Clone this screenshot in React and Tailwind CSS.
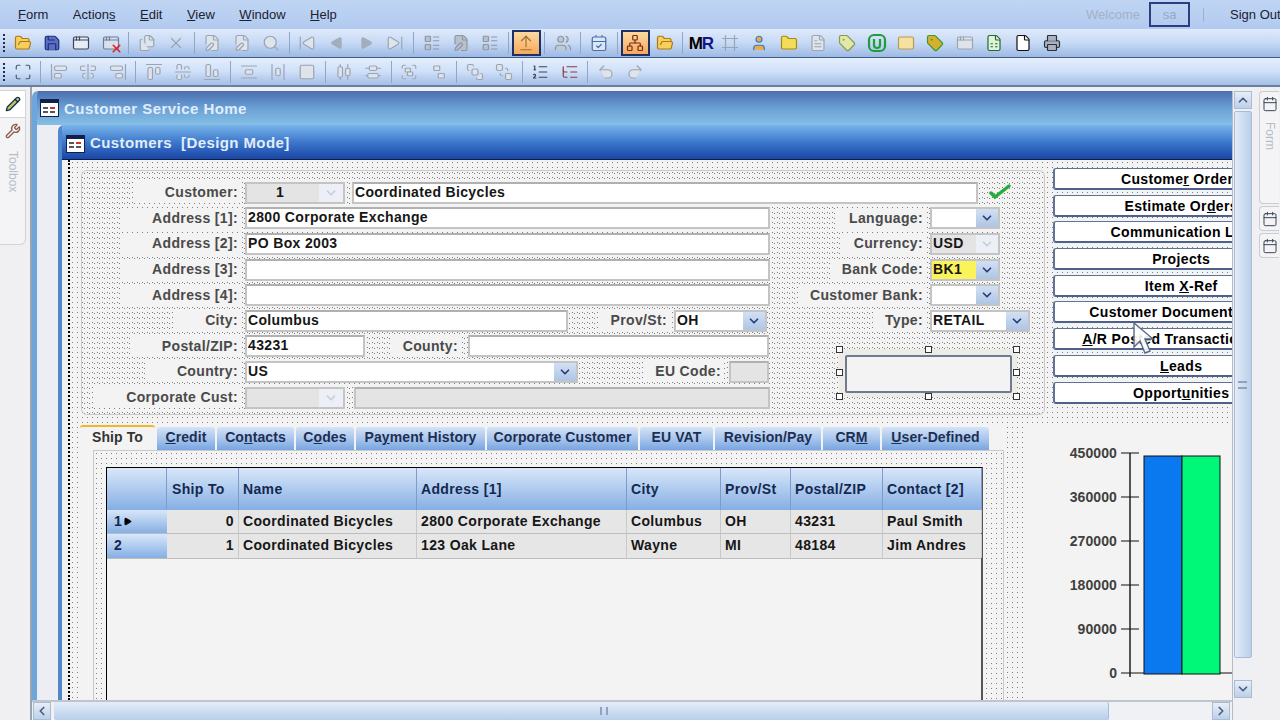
import {
  FolderOpen, Save, AppWindow, Files, X, FilePen, Search, SkipBack, SkipForward, Play, Users, CalendarCheck,
  Frame, User, Folder, FileText, Tag, Mail, FileSpreadsheet, File, Printer, Network, ArrowUpFromLine, LayoutList,
  Maximize, AlignStartVertical, AlignCenterVertical, AlignEndVertical, AlignStartHorizontal, AlignCenterHorizontal,
  AlignEndHorizontal, AlignVerticalSpaceAround, AlignHorizontalSpaceAround, Grid2x2, AlignHorizontalDistributeCenter,
  AlignVerticalDistributeCenter, Group, Ungroup, BringToFront, SendToBack, ListOrdered, ListTree, Undo2, Redo2,
  ChevronDown, ChevronUp, ChevronLeft, ChevronRight, Wrench, Pencil, Calendar,
} from "lucide-react"

const dots = "bg-[radial-gradient(circle,#808080_0.6px,transparent_0.75px)] bg-[length:5px_5px]"
const gray = "text-[#9aa5b4] fill-[#dfe3ea]"

// underline one letter of a caption, like a windows accelerator key
function Acc({ text, at }) {
  if (at === undefined) return text
  return (
    <>
      {text.slice(0, at)}
      <span className="underline">{text[at]}</span>
      {text.slice(at + 1)}
    </>
  )
}

function Sep() {
  return <div className="w-[7px] h-[22px] flex justify-center"><div className="w-px h-full bg-[#8fa6c6]" /></div>
}

function Btn({ icon: Icon, cls = gray, active, children }) {
  return (
    <div className={`w-[29.3px] h-[26px] flex items-center justify-center ${active ? "border-2 border-[#1c2f66] bg-gradient-to-b from-[#fbd9a0] to-[#f5a95a]" : ""}`}>
      {Icon ? <Icon size={18} strokeWidth={1.6} className={cls} /> : children}
    </div>
  )
}

function Grip() {
  return <div className="w-[2px] h-[18px] mr-[3px] ml-[3px] border-l-2 border-dotted border-[#1e2e50]" />
}

function GreenU() {
  return (
    <svg width="20" height="20" viewBox="0 0 20 20" fill="none" stroke="#1f9d3a" strokeWidth="2.2">
      <rect x="2" y="2" width="16" height="16" rx="5" />
      <path d="M7 6v6a3 3 0 0 0 6 0V6" />
    </svg>
  )
}

function Toolbar1() {
  return (
    <div className="h-[29px] flex items-center bg-gradient-to-b from-[#dfeafb] via-[#c6d9f5] to-[#9db9e3] border-b border-[#3d5a8c]">
      <Grip />
      <Btn icon={FolderOpen} cls="text-[#b07a10] fill-[#f6cf5e]" />
      <Btn icon={Save} cls="text-[#1c2f80] fill-[#5a6fc0]" />
      <Btn icon={AppWindow} cls="text-[#3c4658] fill-[#e8edf5]" />
      <Btn>
        <div className="relative">
          <AppWindow size={18} strokeWidth={1.6} className="text-[#6d7d98] fill-[#d8e0ee]" />
          <X size={13} strokeWidth={3} className="absolute -right-[3px] -bottom-[3px] text-[#e02020]" />
        </div>
      </Btn>
      <Sep />
      <Btn icon={Files} />
      <Btn icon={X} />
      <Sep />
      <Btn icon={FilePen} />
      <Btn icon={FilePen} />
      <Btn icon={Search} />
      <Sep />
      <Btn icon={SkipBack} />
      <Btn><Play size={14} className="rotate-180 text-[#a3adbb] fill-[#a3adbb]" /></Btn>
      <Btn><Play size={14} className="text-[#a3adbb] fill-[#a3adbb]" /></Btn>
      <Btn icon={SkipForward} />
      <Sep />
      <Btn icon={LayoutList} cls="text-[#8d97a6] fill-[#b9c1cd]" />
      <Btn icon={FilePen} cls="text-[#8d97a6] fill-[#b9c1cd]" />
      <Btn icon={LayoutList} cls="text-[#8d97a6] fill-[#b9c1cd]" />
      <Sep />
      <Btn icon={ArrowUpFromLine} cls="text-[#a8702c]" active />
      <Sep />
      <Btn icon={Users} cls="text-[#8d97a6] fill-[#c2c8d2]" />
      <Sep />
      <Btn icon={CalendarCheck} cls="text-[#4a6ea8] fill-[#dbe6f5]" />
      <Sep />
      <Btn icon={Network} cls="text-[#7a2a18]" active />
      <Btn icon={FolderOpen} cls="text-[#b07a10] fill-[#f6cf5e]" />
      <Sep />
      <Btn>
        <span className="font-['Liberation_Sans',sans-serif] font-bold text-[17px] leading-none tracking-[-1px] text-[#14148c]"><span className="text-black">M</span>R</span>
      </Btn>
      <Btn icon={Frame} />
      <Btn icon={User} cls="text-[#2a7fd0] fill-[#f0a93a]" />
      <Btn icon={Folder} cls="text-[#a88a10] fill-[#f2dc5a]" />
      <Btn icon={FileText} />
      <Btn icon={Tag} cls="text-[#8a9a50] fill-[#e2e8a8]" />
      <Btn><GreenU /></Btn>
      <Btn icon={Mail} cls="text-[#b89a50] fill-[#f6e2a0]" />
      <Btn icon={Tag} cls="text-[#3d9a30] fill-[#d8b030]" />
      <Btn icon={AppWindow} />
      <Btn icon={FileSpreadsheet} cls="text-[#1e6a34] fill-[#e2f2d8]" />
      <Btn icon={File} cls="text-[#101010] fill-[#ffffff]" />
      <Btn icon={Printer} cls="text-[#2a2f38] fill-[#aab2bf]" />
    </div>
  )
}

function Toolbar2() {
  return (
    <div className="h-[29px] flex items-center bg-gradient-to-b from-[#e4eefc] via-[#cfe0f8] to-[#a4bfe6] border-b-2 border-[#6b7f9f]">
      <Grip />
      <Btn icon={Maximize} cls="text-[#4c5a70]" />
      <Sep />
      <Btn icon={AlignStartVertical} />
      <Btn icon={AlignCenterVertical} />
      <Btn icon={AlignEndVertical} />
      <Sep />
      <Btn icon={AlignStartHorizontal} />
      <Btn icon={AlignCenterHorizontal} />
      <Btn icon={AlignEndHorizontal} />
      <Sep />
      <Btn icon={AlignVerticalSpaceAround} />
      <Btn icon={AlignHorizontalSpaceAround} />
      <Btn icon={Grid2x2} />
      <Sep />
      <Btn icon={AlignHorizontalDistributeCenter} />
      <Btn icon={AlignVerticalDistributeCenter} />
      <Sep />
      <Btn icon={Group} />
      <Btn icon={Ungroup} />
      <Sep />
      <Btn icon={BringToFront} />
      <Btn icon={SendToBack} />
      <Sep />
      <Btn icon={ListOrdered} cls="text-[#39445a]" />
      <Btn icon={ListTree} cls="text-[#8a3a48]" />
      <Sep />
      <Btn icon={Undo2} />
      <Btn icon={Redo2} />
    </div>
  )
}

function MenuBar() {
  const items = [["Form", 0], ["Actions", 6], ["Edit", 0], ["View", 0], ["Window", 0], ["Help", 0]]
  return (
    <div className="h-[29px] flex items-center pl-[18px] bg-gradient-to-b from-[#c0d5f3] to-[#b1caef] text-[13px] text-[#1a2230]">
      <div className="flex gap-[24.5px] flex-1">
        {items.map(([t, a]) => <span key={t}><Acc text={t} at={a} /></span>)}
      </div>
      <span className="text-[#a3b0c6] mr-[9px]">Welcome</span>
      <div className="w-[41px] h-[25px] border-2 border-[#2b3f80] flex items-center justify-center text-[#9aa8be] mr-[13px]">sa</div>
      <div className="w-px h-[14px] bg-[#9fb0cc] mr-[26px]" />
      <span className="whitespace-nowrap w-[50px]">Sign Out</span>
    </div>
  )
}

function Label({ children, w }) {
  return (
    <div className="flex justify-end shrink-0" style={{ width: w }}>
      <span className="bg-[#f3f3f3] pl-[32px] pr-[3px] h-[21px] leading-[21px] text-[#4a4a4a] whitespace-nowrap">{children}</span>
    </div>
  )
}

function ShortLabel({ children, w }) {
  return (
    <div className="flex justify-end shrink-0" style={{ width: w }}>
      <span className="bg-[#f3f3f3] pl-[12px] pr-[3px] h-[21px] leading-[21px] text-[#4a4a4a] whitespace-nowrap">{children}</span>
    </div>
  )
}

function Field({ w, children, cls = "bg-white" }) {
  return (
    <div className={`h-[22px] ml-[4px] shrink-0 border-2 border-[#c4c4c4] border-t-[#b0b0b0] pl-[1px] leading-[17px] text-[#161616] overflow-hidden whitespace-nowrap ${cls}`} style={{ width: w }}>
      {children}
    </div>
  )
}

function Combo({ w, children, cls = "", off, arrowW = 22 }) {
  return (
    <div className={`h-[22px] ml-[4px] shrink-0 flex border-2 border-[#c4c4c4] leading-[17px] text-[#161616] ${off ? "bg-[#e4e4e4]" : "bg-white"}`} style={{ width: w }}>
      <div className={`flex-1 pl-[1px] overflow-hidden whitespace-nowrap ${cls}`}>{children}</div>
      <div className={`flex items-center justify-center ${off ? "bg-[#eceff5]" : "bg-gradient-to-b from-[#d3e0f3] to-[#aec5e4]"}`} style={{ width: arrowW }}>
        <ChevronDown size={14} strokeWidth={3} className={off ? "text-[#c8ced8]" : "text-[#23417a]"} />
      </div>
    </div>
  )
}

function Row({ children }) {
  return <div className="h-[25.6px] flex items-center">{children}</div>
}

function Handle() {
  return <div className="w-[7px] h-[7px] bg-white border border-[#333]" />
}

function SelectedBox() {
  return (
    <div className="relative w-[178px] h-[48px] ml-[64px] mt-[15px] bg-[#ecebe6]">
      <div className="absolute left-[6px] top-[6px] w-[167px] h-[38px] bg-[#f3f3f3] border-2 border-[#6f7b8c] rounded-[2px]" />
      <div className="absolute inset-0 flex flex-col justify-between -my-[3px] -mx-[3px]">
        <div className="flex justify-between"><Handle /><Handle /><Handle /></div>
        <div className="flex justify-between"><Handle /><Handle /></div>
        <div className="flex justify-between"><Handle /><Handle /><Handle /></div>
      </div>
    </div>
  )
}

function FormPanel() {
  return (
    <div className={`w-[965px] h-[245px] rounded-md border border-[#c9c9c9] pt-[9px] ${dots}`}>
      <Row>
        <Label w={159}>Customer:</Label>
        <Combo w={100} off arrowW={24}><div className="pl-[28px]">1</div></Combo>
        <div className="w-[3px]" />
        <Field w={626}>Coordinated Bicycles</Field>
        <svg className="ml-[10px] -mt-[3px]" width="24" height="16" viewBox="0 0 24 16" fill="none" stroke="#25ad3c" strokeWidth="3.4" strokeLinecap="round">
          <path d="M3 10l4 4L21 3" />
        </svg>
      </Row>
      <div className="flex">
        <div className="w-[693px] shrink-0">
          <Row><Label w={159}>Address [1]:</Label><Field w={525}>2800 Corporate Exchange</Field></Row>
          <Row><Label w={159}>Address [2]:</Label><Field w={525}>PO Box 2003</Field></Row>
          <Row><Label w={159}>Address [3]:</Label><Field w={525} /></Row>
          <Row><Label w={159}>Address [4]:</Label><Field w={525} /></Row>
          <Row>
            <Label w={159}>City:</Label><Field w={323}>Columbus</Field>
            <ShortLabel w={102}>Prov/St:</ShortLabel><Combo w={93}>OH</Combo>
          </Row>
          <Row>
            <Label w={159}>Postal/ZIP:</Label><Field w={120}>43231</Field>
            <ShortLabel w={96}>County:</ShortLabel><div className="w-[3px]" /><Field w={301} />
          </Row>
          <Row>
            <Label w={159}>Country:</Label><Combo w={333}>US</Combo>
            <ShortLabel w={146}>EU Code:</ShortLabel><div className="w-[1px]" /><Field w={40} cls="bg-[#e4e4e4]" />
          </Row>
          <Row>
            <Label w={159}>Corporate Cust:</Label><Combo w={100} off arrowW={24} />
            <div className="w-[5px]" />
            <Field w={416} cls="bg-[#e4e4e4]" />
          </Row>
        </div>
        <div className="flex-1">
          <Row><ShortLabel w={151}>Language:</ShortLabel><Combo w={70} /></Row>
          <Row><ShortLabel w={151}>Currency:</ShortLabel><Combo w={70} off>USD</Combo></Row>
          <Row>
            <ShortLabel w={151}>Bank Code:</ShortLabel>
            <Combo w={70} cls="bg-[#fbf35a]">BK1</Combo>
          </Row>
          <Row><ShortLabel w={151}>Customer Bank:</ShortLabel><Combo w={70} /></Row>
          <Row><ShortLabel w={151}>Type:</ShortLabel><Combo w={100}>RETAIL</Combo></Row>
          <SelectedBox />
        </div>
      </div>
    </div>
  )
}

function SideButtons() {
  const items = [
    ["Customer Orders", 7, ""],
    ["Estimate Orders", 11, ""],
    ["Communication Log", undefined, ""],
    ["Projects", undefined, ""],
    ["Item X-Ref", 5, ""],
    ["Customer Document", undefined, "pr-[40px]"],
    ["A/R Posted Transactions", 0, "pr-[25px]"],
    ["Leads", 0, ""],
    ["Opportunities", 6, ""],
  ]
  return (
    <div className="flex flex-col gap-[4.7px] w-[179px] -mt-[2px] overflow-hidden">
      {items.map(([t, a, extra]) => (
        <div key={t} className={`w-[254px] h-[22px] shrink-0 rounded-[3px] bg-white border-l-2 border-b-2 border-t border-[#5f7399] border-b-[#4d6288] leading-[21px] text-center text-black whitespace-nowrap ${extra}`}>
          <Acc text={t} at={a} />
        </div>
      ))}
    </div>
  )
}

function Tabs() {
  const tabs = [
    ["Credit", 0, 58], ["Contacts", 2, 77], ["Codes", 1, 58], ["Payment History", 2, 129],
    ["Corporate Customer", undefined, 151], ["EU VAT", undefined, 73], ["Revision/Pay", undefined, 106],
    ["CRM", 2, 57], ["User-Defined", 0, 107],
  ]
  return (
    <div className="flex h-[25px] items-end gap-[2px] tracking-[0.1px] -ml-[1px]">
      <div className="w-[75px] h-[25px] rounded-t-[3px] border-t-2 border-[#f3b531] bg-[#f3f3f3] text-center leading-[20px] text-[#333]">Ship To</div>
      {tabs.map(([t, a, w]) => (
        <div key={t} className="h-[23px] rounded-t-[3px] bg-gradient-to-b from-[#d5e3f6] via-[#a9c6ec] to-[#78a5e0] text-center leading-[21px] text-[#1d2f55] whitespace-nowrap" style={{ width: w }}>
          <Acc text={t} at={a} />
        </div>
      ))}
    </div>
  )
}

const cols = "grid grid-cols-[60px_72px_178px_210px_94px_70px_92px_99px]"

function Grid() {
  const heads = ["", "Ship To", "Name", "Address [1]", "City", "Prov/St", "Postal/ZIP", "Contact [2]"]
  const rows = [
    ["0", "Coordinated Bicycles", "2800 Corporate Exchange", "Columbus", "OH", "43231", "Paul Smith"],
    ["1", "Coordinated Bicycles", "123 Oak Lane", "Wayne", "MI", "48184", "Jim Andres"],
  ]
  return (
    <div className="w-[877px] h-[236px] bg-[#f3f3f3] border border-b-0 border-black border-r-2 border-r-[#555]">
      <div className={`${cols} h-[42px] bg-gradient-to-b from-[#d9e7f9] to-[#86afe4]`}>
        {heads.map((h, i) => (
          <div key={i} className={`border-r border-[#7f9cc8] flex items-center text-[#14294f] ${i === 1 ? "pl-[5px]" : "pl-[4px]"}`}>{h}</div>
        ))}
      </div>
      {rows.map((r, i) => (
        <div key={i} className={`${cols} h-[24.3px] border-b border-[#bdbdbd]`}>
          <div className="bg-gradient-to-b from-[#d9e7f9] to-[#86afe4] flex items-center pl-[7px] gap-[1px] text-[#14294f]">
            {i + 1}
            {i === 0 && <Play size={9} className="text-black fill-black" />}
          </div>
          {r.map((c, j) => (
            <div key={j} className={`bg-[#e6e6e6] border-r border-[#c9c9c9] flex items-center text-[#161616] whitespace-nowrap overflow-hidden ${j === 0 ? "justify-end pr-[4px]" : "pl-[4px]"}`}>{c}</div>
          ))}
        </div>
      ))}
    </div>
  )
}

function TabArea() {
  return (
    <div className="w-[925px] flex flex-col">
      <Tabs />
      <div className={`ml-[12px] w-[911px] flex-1 border border-b-0 border-[#c9c9c9] pl-[12px] pt-[16px] ${dots}`}>
        <Grid />
      </div>
    </div>
  )
}

function Chart() {
  const labels = ["450000", "360000", "270000", "180000", "90000", "0"]
  return (
    <div className="flex w-[172px] pt-[20px] self-stretch">
      <div className="w-[57px] h-[236px] flex flex-col justify-between items-end text-[#3f3f3f] tracking-[0.1px]">
        {labels.map(l => <span key={l} className="leading-[16px]">{l}</span>)}
      </div>
      <svg width="115" height="236" viewBox="0 0 115 236" className="shrink-0" fill="none" stroke="#111">
        <path d="M13 8V232" strokeWidth="1.4" />
        <path d="M4 8h18M4 52h18M4 96h18M4 140h18M4 184h18M4 228h111" strokeWidth="1.2" />
        <rect x="27" y="11" width="38" height="218" fill="#0a78ee" strokeWidth="1" />
        <rect x="65" y="11" width="38" height="218" fill="#00f878" strokeWidth="1" />
      </svg>
    </div>
  )
}

function DesignSurface() {
  return (
    <div className={`flex-1 min-h-0 overflow-hidden bg-[#f3f3f3] pl-[11px] pt-[10px] border-l-2 border-dotted border-black ${dots} flex flex-col gap-[10px] relative`}>
      <div className="flex gap-[8px]">
        <FormPanel />
        <SideButtons />
      </div>
      <div className="flex flex-1 min-h-0 bg-[#f3f3f3]">
        <TabArea />
        <div className={`w-[18px] ${dots}`} />
        <div className="w-[37px]" />
        <Chart />
      </div>
      {/* mouse pointer caught by the recording */}
      <svg className="absolute left-[1062px] top-[161px]" width="26" height="36" viewBox="0 0 26 36">
        <path d="M2 2v24l6-6 5 12 5-2-5-12h8z" fill="#fff" fillOpacity="0.9" stroke="#5a6a88" strokeWidth="1.4" />
      </svg>
    </div>
  )
}

function Mdi() {
  return (
    <div className="flex-1 min-h-0 flex flex-col rounded-tl-md overflow-hidden border-l-[5px] border-[#6ea6dc]">
      <div className="h-[34px] shrink-0 flex items-center pl-[3px] gap-[5px] bg-gradient-to-b from-[#4a6fb0] via-[#6a9fd4] to-[#86c0e6]">
        <WinIcon />
        <span className="pt-[2px] text-[#e1edfa] text-[15px] font-bold tracking-[0.45px]">Customer Service Home</span>
      </div>
      <div className="flex-1 min-h-0 flex bg-[#eceef3]">
        <div className="w-[21px] shrink-0" />
        <div className="flex-1 min-w-0 flex flex-col rounded-tl-md overflow-hidden border-l-[4px] border-[#4f86cc]">
          <div className="h-[35px] shrink-0 flex items-center pl-[4px] gap-[5px] pt-[3px] bg-gradient-to-b from-[#79b4ea] via-[#3d78cc] to-[#1b46a6] border-b border-[#0d1d4a]">
            <WinIcon />
            <span className="text-[#e1edfa] text-[15px] font-bold tracking-[0.4px]">Customers&nbsp; [Design Mode]</span>
          </div>
          <div className="flex-1 min-h-0 flex bg-[#f0f0f0]">
            <div className="w-[6px] shrink-0" />
            <DesignSurface />
          </div>
        </div>
      </div>
    </div>
  )
}

function WinIcon() {
  return (
    <div className="w-[19px] h-[18px] bg-white border border-[#10204a] border-t-[4px] flex flex-col justify-center gap-[2px] px-[2px]">
      <div className="h-[2px] flex gap-[2px]"><div className="w-[5px] bg-[#556]" /><div className="w-[5px] bg-[#c33]" /></div>
      <div className="h-[2px] flex gap-[2px]"><div className="w-[5px] bg-[#556]" /><div className="w-[5px] bg-[#556]" /></div>
    </div>
  )
}

function ArrowBtn({ icon: Icon, cls = "" }) {
  return (
    <div className={`w-[18px] h-[18px] shrink-0 flex items-center justify-center bg-gradient-to-b from-[#e8eef7] to-[#bcd0ea] border border-[#a9bcd6] ${cls}`}>
      <Icon size={14} strokeWidth={3} className="text-[#4b5f80]" />
    </div>
  )
}

function BottomScroll() {
  return (
    <div className="h-[20px] shrink-0 flex items-center bg-[#f0f1f4] border-t-2 border-[#c0c4cc] pl-[1px]">
      <ArrowBtn icon={ChevronLeft} />
      <div className="w-[1055px] h-[18px] ml-[3px] pl-[45px] rounded-[2px] bg-gradient-to-b from-[#e4edf9] to-[#b8cee9] border-r border-[#a9bcd6] flex items-center justify-center">
        <div className="w-[8px] h-[8px] border-x-2 border-[#8da3c2]" />
      </div>
      <div className="flex-1" />
      <ArrowBtn icon={ChevronRight} cls="mr-[2px]" />
    </div>
  )
}

function RightScroll() {
  return (
    <div className="w-[20px] shrink-0 mt-[4px] flex flex-col items-center bg-[#eef0f4] border-l border-[#b4bccb]">
      <ArrowBtn icon={ChevronUp} />
      <div className="w-[18px] h-[547px] mt-[2px] rounded-[2px] bg-gradient-to-r from-[#e3ecf8] to-[#b9cfe9] border border-[#a9bcd6] flex items-center justify-center">
        <div className="w-[9px] h-[8px] border-y-2 border-[#8da3c2]" />
      </div>
      <div className="flex-1" />
      <ArrowBtn icon={ChevronDown} cls="mb-[22px]" />
    </div>
  )
}

function DockTab({ icon: Icon, children, h }) {
  return (
    <div className="w-[20px] ml-[7px] rounded-l-[4px] border border-r-0 border-[#c8ccd4] bg-[#f4f4f6] flex flex-col items-center pt-[4px]" style={{ height: h }}>
      <Icon size={16} strokeWidth={1.5} className="text-[#3a4558] shrink-0" />
      {children && <span className="mt-[10px] [writing-mode:vertical-rl] text-[12px] text-[#b6bcc6]">{children}</span>}
    </div>
  )
}

export default function App() {
  return (
    <div className="w-[1280px] h-[720px] overflow-hidden flex flex-col bg-[#f0f0f2] font-['Liberation_Sans',sans-serif] text-[14px] font-bold tracking-[0.35px]">
      <div className="font-normal tracking-normal">
        <MenuBar />
        <Toolbar1 />
        <Toolbar2 />
      </div>
      <div className="flex-1 min-h-0 flex">
        <div className="w-[32px] shrink-0 border-r-[2px] border-[#9aa3b0] pt-[3px]">
          <div className="w-[26px] h-[155px] rounded-br-md border border-l-0 border-[#d0d3da] bg-[#f4f4f6] flex flex-col items-center font-normal tracking-normal">
            <div className="w-full h-[27px] bg-white border-b border-[#d0d3da] flex items-center justify-center">
              <Pencil size={16} className="text-[#1c2c50] fill-[#b7c95a]" />
            </div>
            <Wrench size={16} className="mt-[5px] text-[#8a5a4a]" />
            <span className="mt-[12px] [writing-mode:vertical-rl] text-[12px] text-[#b6bcc6]">Toolbox</span>
          </div>
        </div>
        <div className="w-[1200px] shrink-0 flex flex-col pt-[4px]">
          <Mdi />
          <BottomScroll />
        </div>
        <RightScroll />
        <div className="flex-1 pt-[4px] flex flex-col gap-[2px] font-normal tracking-normal">
          <DockTab icon={Calendar} h={113}>Form</DockTab>
          <DockTab icon={Calendar} h={25} />
          <DockTab icon={Calendar} h={25} />
        </div>
      </div>
    </div>
  )
}
